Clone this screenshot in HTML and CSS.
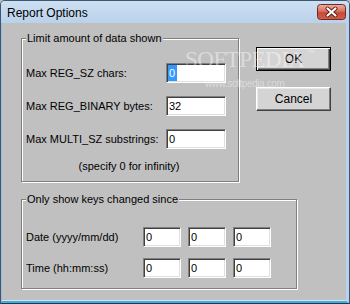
FILE: index.html
```html
<!DOCTYPE html>
<html>
<head>
<meta charset="utf-8">
<link rel="stylesheet" href="styles.css">
</head>
<body>
<div class="window">
  <div class="titlebar">
    <span class="title">Report Options</span>
    <span class="close">
      <svg width="29" height="16" viewBox="0 0 29 16">
        <defs>
          <linearGradient id="cg" x1="0" y1="0" x2="0" y2="1">
            <stop offset="0" stop-color="#eab3a5"/>
            <stop offset="0.45" stop-color="#d8705f"/>
            <stop offset="0.55" stop-color="#c84a38"/>
            <stop offset="1" stop-color="#d0604a"/>
          </linearGradient>
        </defs>
        <rect x="0.5" y="0.5" width="28" height="15" rx="3" ry="3" fill="url(#cg)" stroke="#6e2a22"/>
        <path d="M10.5 4.5 L18.5 11.5 M18.5 4.5 L10.5 11.5" stroke="#5a1c14" stroke-width="4" stroke-linecap="round"/>
        <path d="M10.5 4.5 L18.5 11.5 M18.5 4.5 L10.5 11.5" stroke="#ffffff" stroke-width="2.2" stroke-linecap="round"/>
      </svg>
    </span>
  </div>
  <div class="frame">
    <div class="client">
      <div class="top-row">
        <div class="group group-limit">
          <div class="group-title">Limit amount of data shown</div>
          <div class="limit-grid">
            <span class="label">Max REG_SZ chars:</span>
            <div class="field"><span class="sel">0</span></div>
            <span class="label">Max REG_BINARY bytes:</span>
            <div class="field">32</div>
            <span class="label">Max MULTI_SZ substrings:</span>
            <div class="field">0</div>
          </div>
          <div class="note">(specify 0 for infinity)</div>
        </div>
        <div class="buttons">
          <div class="btn btn-default">OK</div>
          <div class="btn">Cancel</div>
        </div>
      </div>
      <div class="group group-since">
        <div class="group-title">Only show keys changed since</div>
        <div class="since-grid">
          <span class="label">Date (yyyy/mm/dd)</span>
          <div class="field">0</div>
          <div class="field">0</div>
          <div class="field">0</div>
          <span class="label">Time (hh:mm:ss)</span>
          <div class="field">0</div>
          <div class="field">0</div>
          <div class="field">0</div>
        </div>
      </div>
      <div class="watermark">
        <span class="wm-big">SOFTPEDIA</span><span class="wm-tm">™</span>
        <span class="wm-url">www.softpedia.com</span>
      </div>
    </div>
  </div>
</div>
</body>
</html>
```
FILE: styles.css
```css
* { box-sizing: border-box; }
html, body { margin: 0; padding: 0; background: #c0c0c0; }
body { font-family: "Liberation Sans", Arial, sans-serif; font-size: 11px; color: #000; }

.window {
  width: 350px;
  height: 304px;
  border-left: 1px solid #3f5670;
  border-right: 1px solid #3f5670;
  border-top: 1px solid #3f5670;
  border-bottom: 1px solid #24384c;
  border-radius: 5px 5px 0 0;
  display: flex;
  flex-direction: column;
  background: #b9d1ea;
  overflow: hidden;
}

.titlebar {
  height: 22px;
  flex: none;
  display: flex;
  align-items: flex-start;
  justify-content: space-between;
  background: linear-gradient(#cde0f3, #bad1ea);
  padding-left: 6px;
}
.title {
  font-size: 12px;
  line-height: 14px;
  margin-top: 5px;
  color: #000;
}
.close {
  display: block;
  width: 29px;
  height: 16px;
  margin-top: 3px;
  margin-right: 3px;
}
.close svg { display: block; }

.frame {
  flex: 1;
  display: flex;
  border-left: 1px solid #9db9d6;
  border-right: 3px solid #b9d1ea;
  border-bottom: 2px solid #33b1e6;
}
.client {
  position: relative;
  flex: 1;
  background: #c0c0c0;
  border-bottom: 1px solid #e2e2e2;
  padding: 15px 0 0 19px;
}

.top-row {
  display: flex;
  align-items: flex-start;
}

.group {
  border: 1px solid #808080;
  box-shadow: inset 1px 1px #fff, 1px 1px #fff;
}
.group-title {
  width: fit-content;
  line-height: 13px;
  margin-top: -7px;
  padding: 0 1px;
  background: #c0c0c0;
}

.group-limit {
  width: 218px;
  height: 144px;
  padding: 0 12px 8px 4px;
}
.group-limit .group-title { margin-bottom: 18px; }
.limit-grid {
  display: grid;
  grid-template-columns: 1fr 60px;
  grid-auto-rows: 20px;
  row-gap: 13px;
  align-items: center;
}
.note {
  margin-top: 11px;
  line-height: 13px;
  text-align: center;
  padding-left: 6px;
}

.label { line-height: 13px; }

.field {
  height: 20px;
  background: #fff;
  border: 1px solid;
  border-color: #808080 #fff #fff #808080;
  box-shadow: inset 1px 1px #404040, inset -1px -1px #dfdfdf;
  padding: 1px 2px 1px 2px;
  line-height: 16px;
  display: flex;
  align-items: stretch;
}
.sel {
  background: #3399ff;
  color: #fff;
  padding: 0 2px 0 1px;
  margin-left: -1px;
}

.buttons {
  display: flex;
  flex-direction: column;
  gap: 16px;
  margin-left: 17px;
  margin-top: 9px;
}
.btn {
  width: 75px;
  height: 24px;
  background: #d4d4d4;
  border: 1px solid;
  border-color: #fff #404040 #404040 #fff;
  box-shadow: inset -1px -1px #808080, inset 1px 1px #e8e8e8;
  display: flex;
  align-items: center;
  justify-content: center;
  font-size: 12px;
}
.btn-default {
  border: 1px solid #000;
  box-shadow: inset 1px 1px #fff, inset -1px -1px #404040, inset -2px -2px #808080;
}

.group-since {
  width: 276px;
  height: 90px;
  margin-top: 17px;
  padding: 0 4px 11px 4px;
}
.group-since .group-title { margin-bottom: 21px; }
.since-grid {
  display: grid;
  grid-template-columns: 110px 38px 38px 38px;
  grid-auto-rows: 20px;
  column-gap: 7px;
  row-gap: 11px;
  align-items: center;
}

.watermark {
  position: absolute;
  left: 183px;
  top: 25px;
  width: 140px;
  pointer-events: none;
  color: rgba(255, 255, 255, 0.45);
}
.wm-big {
  font-family: "Liberation Serif", "Times New Roman", serif;
  font-size: 23px;
  line-height: 23px;
  letter-spacing: -0.5px;
}
.wm-tm {
  font-family: "Liberation Sans", Arial, sans-serif;
  font-size: 8px;
  vertical-align: top;
  margin-left: 2px;
}
.wm-url {
  display: block;
  margin-top: 7px;
  margin-left: 20px;
  font-size: 10px;
  line-height: 12px;
  letter-spacing: -0.4px;
}
```
